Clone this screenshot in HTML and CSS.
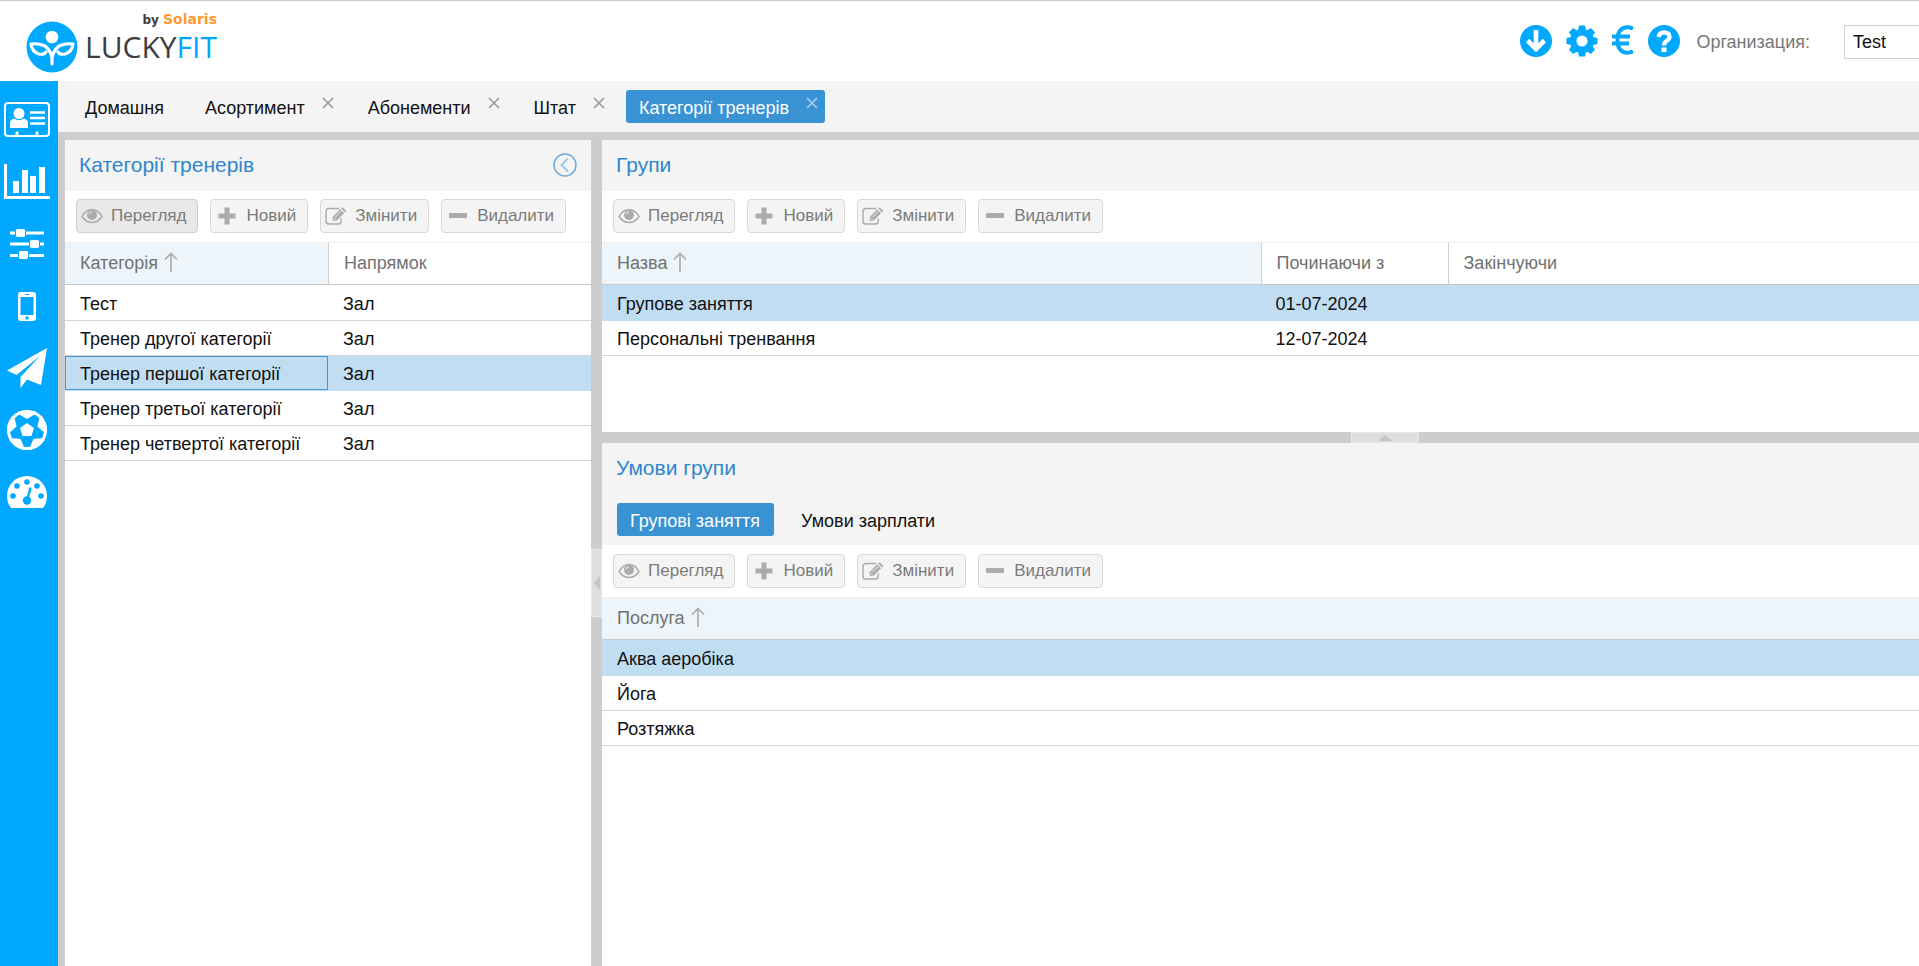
FILE: index.html
```html
<!DOCTYPE html>
<html lang="uk">
<head>
<meta charset="utf-8">
<title>LuckyFit</title>
<link rel="stylesheet" href="styles.css">
</head>
<body>
<svg class="defs" aria-hidden="true">
  <symbol id="eye" viewBox="0 0 22 16"><path d="M1 8.500Q5 1.500 11 1.500T21 8.500Q17 14.500 11 14.500T1 8.500Z" fill="none" stroke="currentColor" stroke-width="1.500"/><circle cx="11" cy="7" r="5" fill="currentColor"/><path d="M8.200 6.500Q8.500 4 11 3.800" fill="none" stroke="#f4f4f4" stroke-width="1"/></symbol>
  <symbol id="plus" viewBox="0 0 18 18"><path d="M6.500 0.500h5v6h6v5h-6v6h-5v-6h-6v-5h6z" fill="currentColor"/></symbol>
  <symbol id="minus" viewBox="0 0 18 18"><rect y="6" width="18" height="5" rx="1" fill="currentColor"/></symbol>
  <symbol id="edit" viewBox="0 0 23 19"><path d="M15 1.500H4Q1 1.500 1 4.500V15Q1 18 4 18H14Q17 18 17 15V12" fill="none" stroke="currentColor" stroke-width="1.500"/><path d="M8 14.500V10.500L16 2.500L20 6.500L12 14.500Z" fill="currentColor"/><path d="M17 1.500L18.500 0.300L22.500 4.200L21 5.700Z" fill="currentColor"/><path d="M9 11.500L11 13.500M11 10.500L17 4.500" stroke="#f4f4f4" stroke-width="1"/></symbol>
  <symbol id="close" viewBox="0 0 12 12"><path d="M1 1L11 11M11 1L1 11" fill="none" stroke="currentColor" stroke-width="1.600"/></symbol>
  <symbol id="up" viewBox="0 0 14 20"><path d="M7 20V1.500M1 7.500L7 1.500L13 7.500" fill="none" stroke="currentColor" stroke-width="1.700"/></symbol>
</svg>

<header class="top">
  <a class="logo" href="#">
    <svg class="logo-mark" viewBox="0 0 52 52" aria-hidden="true">
      <circle cx="26" cy="26" r="25.500" fill="#00a9ff"/>
      <circle cx="26" cy="16" r="6.300" fill="#fff"/>
      <path d="M26 43V37Q25 30 19 25Q12 22 5 23Q6 31 13 33Q18 34 20 31M26 43V37Q27 30 33 25Q40 22 47 23Q46 31 39 33Q34 34 32 31" fill="none" stroke="#fff" stroke-width="3.200" stroke-linecap="round" stroke-linejoin="round"/>
    </svg>
    <span class="logo-text">
      <span class="logo-by">by <span class="logo-brand">Solaris</span></span>
      <span class="logo-name">LUCKY<span class="logo-fit">FIT</span></span>
    </span>
  </a>
  <div class="tools">
    <button class="tool" aria-label="Download"><svg viewBox="0 0 32 32" width="32" height="32"><circle cx="16" cy="16" r="16" fill="currentColor"/><path d="M16 5V22M7.500 15.500L16 24L24.500 15.500" fill="none" stroke="#fff" stroke-width="4.600"/></svg></button>
    <button class="tool" aria-label="Settings"><svg viewBox="0 0 32 32" width="32" height="32"><g fill="currentColor"><circle cx="16" cy="16" r="12"/><g id="teeth"><path d="M13 0.500h6l1 5h-8zM13 31.500h6l1-5h-8zM0.500 13v6l5 1v-8zM31.500 13v6l-5 1v-8z"/></g><use href="#teeth" transform="rotate(45 16 16)"/></g><circle cx="16" cy="16" r="5.500" fill="#fff"/></svg></button>
    <button class="tool" aria-label="Currency"><svg viewBox="0 0 22 30" width="22" height="30"><path d="M21 3.500Q9 -1 5.500 11V19Q9 31 21 26.500M0 11.500H18M0 18.500H17" fill="none" stroke="currentColor" stroke-width="4"/></svg></button>
    <button class="tool" aria-label="Help"><svg viewBox="0 0 32 32" width="32" height="32"><circle cx="16" cy="16" r="16" fill="currentColor"/><path d="M10.500 12Q11.500 7.300 16 7.300Q21.500 7.500 21.500 12Q21.500 14 18.500 16Q16 17.500 16 20.500" fill="none" stroke="#fff" stroke-width="4.300"/><rect x="13.500" y="22.500" width="5" height="4.500" fill="#fff"/></svg></button>
    <label class="org-label" for="org">Организация:</label>
    <input class="org-input" id="org" type="text" value="Test">
  </div>
</header>

<div class="body">
  <nav class="side">
    <a href="#" aria-label="Clients"><svg viewBox="0 0 46 36" width="46" height="36"><rect x="1" y="1" width="44" height="33" rx="3" fill="none" stroke="#fff" stroke-width="2"/><circle cx="15" cy="11.500" r="5.500" fill="#fff"/><path d="M6 26V21Q6 17.500 10 16.500Q15 20 20 16.500Q24 17.500 24 21V26Z" fill="#fff"/><path d="M26 10.500H41M26 16H41M26 21.500H41" stroke="#fff" stroke-width="2.600"/><path d="M12 34V30H14V34M32 34V30H34V34" fill="#fff" stroke="#fff"/></svg></a>
    <a href="#" aria-label="Reports"><svg viewBox="0 0 46 36" width="46" height="36"><path d="M1.500 0V33.500H46" fill="none" stroke="#fff" stroke-width="3"/><path d="M9 17h6v12H9zM18 6h6v23h-6zM26 12h6v17h-6zM35 3h6v26h-6z" fill="#fff"/></svg></a>
    <a href="#" aria-label="Settings"><svg viewBox="0 0 34 32" width="34" height="32"><path d="M0 5H34M0 16H34M0 27.500H34" stroke="#fff" stroke-width="3"/><g fill="#fff" stroke="#00a9ff"><rect x="5.500" y="0.500" width="10" height="9" rx="2"/><rect x="19.500" y="11.500" width="10" height="9" rx="2"/><rect x="8.500" y="22.500" width="10" height="9" rx="2"/></g></svg></a>
    <a href="#" aria-label="Mobile"><svg viewBox="0 0 18 29" width="18" height="29"><rect width="18" height="29" rx="3" fill="#fff"/><rect x="2.500" y="5" width="13" height="18" fill="#00a9ff"/><circle cx="9" cy="26" r="1.700" fill="#00a9ff"/><path d="M7 2.500h4" stroke="#00a9ff"/></svg></a>
    <a href="#" aria-label="Messages"><svg viewBox="0 0 40 40" width="40" height="40"><path d="M40 0L0 22.500L9.500 27L33 8L13.500 29V40L20 31.500L34 37Z" fill="#fff"/></svg></a>
    <a href="#" aria-label="Sport"><svg viewBox="0 0 40 40" width="40" height="40"><circle cx="20" cy="20" r="20" fill="#fff"/><circle cx="20" cy="20" r="17" fill="#00a9ff"/><path id="patch" d="M11 1.500L14 5.500L20 9L26 5.500L29 1.500L20 0Z" fill="#fff"/><use href="#patch" transform="rotate(72 20 20)"/><use href="#patch" transform="rotate(144 20 20)"/><use href="#patch" transform="rotate(216 20 20)"/><use href="#patch" transform="rotate(288 20 20)"/><path d="M20 13L27 18L24.500 26H15.500L13 18Z" fill="#fff"/></svg></a>
    <a href="#" aria-label="Dashboard"><svg viewBox="0 0 40 32" width="40" height="32"><path d="M4 32Q0 27 0 20A20 20 0 0 1 40 20Q40 27 36 32Z" fill="#fff"/><g fill="#00a9ff"><circle cx="6" cy="20" r="2.800"/><circle cx="10" cy="10" r="2.800"/><circle cx="20" cy="6" r="2.800"/><circle cx="30" cy="10" r="2.800"/><circle cx="34" cy="20" r="2.800"/><circle cx="20" cy="24.500" r="4.200"/></g><path d="M20.500 23L23.500 11.500" stroke="#00a9ff" stroke-width="2.400"/></svg></a>
  </nav>

  <main class="work">
    <div class="tabs">
      <button class="tab">Домашня</button>
      <button class="tab">Асортимент<svg class="x"><use href="#close"/></svg></button>
      <button class="tab">Абонементи<svg class="x"><use href="#close"/></svg></button>
      <button class="tab">Штат<svg class="x"><use href="#close"/></svg></button>
      <button class="tab active">Категорії тренерів<svg class="x"><use href="#close"/></svg></button>
    </div>

    <div class="panes">
      <section class="panel left">
        <div class="panel-head">
          <h2>Категорії тренерів</h2>
          <button class="collapse" aria-label="Згорнути"><svg viewBox="0 0 24 24" width="24" height="24"><circle cx="12" cy="12" r="11" fill="none" stroke="#6fabd8" stroke-width="1.500"/><path d="M15 5.500L8.500 12L15 18.500" fill="none" stroke="#9cc8ea" stroke-width="2"/></svg></button>
        </div>
        <div class="bar">
          <button class="btn pressed"><svg class="ic"><use href="#eye"/></svg>Перегляд</button>
          <button class="btn"><svg class="ic ic-sm"><use href="#plus"/></svg>Новий</button>
          <button class="btn"><svg class="ic"><use href="#edit"/></svg>Змінити</button>
          <button class="btn"><svg class="ic ic-sm"><use href="#minus"/></svg>Видалити</button>
        </div>
        <table class="grid categories">
          <thead><tr><th class="sorted">Категорія<svg class="sort"><use href="#up"/></svg></th><th>Напрямок</th></tr></thead>
          <tbody>
            <tr><td>Тест</td><td>Зал</td></tr>
            <tr><td>Тренер другої категорії</td><td>Зал</td></tr>
            <tr class="selected"><td class="focus">Тренер першої категорії</td><td>Зал</td></tr>
            <tr><td>Тренер третьої категорії</td><td>Зал</td></tr>
            <tr><td>Тренер четвертої категорії</td><td>Зал</td></tr>
          </tbody>
        </table>
      </section>

      <div class="split split-v"><button class="grip grip-v" aria-label="Згорнути"><svg viewBox="0 0 6 14" width="6" height="14"><path d="M6 0V14L0 7Z" fill="#c4c4c4"/></svg></button></div>

      <div class="right">
        <section class="panel groups">
          <div class="panel-head"><h2>Групи</h2></div>
          <div class="bar">
            <button class="btn"><svg class="ic"><use href="#eye"/></svg>Перегляд</button>
            <button class="btn"><svg class="ic ic-sm"><use href="#plus"/></svg>Новий</button>
            <button class="btn"><svg class="ic"><use href="#edit"/></svg>Змінити</button>
            <button class="btn"><svg class="ic ic-sm"><use href="#minus"/></svg>Видалити</button>
          </div>
          <table class="grid">
            <colgroup><col class="c-name"><col class="c-from"><col></colgroup>
            <thead><tr><th class="sorted">Назва<svg class="sort"><use href="#up"/></svg></th><th>Починаючи з</th><th>Закінчуючи</th></tr></thead>
            <tbody>
              <tr class="selected"><td>Групове заняття</td><td>01-07-2024</td><td></td></tr>
              <tr><td>Персональні тренвання</td><td>12-07-2024</td><td></td></tr>
            </tbody>
          </table>
        </section>

        <div class="split split-h"><button class="grip grip-h" aria-label="Згорнути"><svg viewBox="0 0 14 6" width="14" height="6"><path d="M0 6H14L7 0Z" fill="#c4c4c4"/></svg></button></div>

        <section class="panel terms">
          <div class="panel-head"><h2>Умови групи</h2></div>
          <div class="subtabs">
            <button class="tab active">Групові заняття</button>
            <button class="tab">Умови зарплати</button>
          </div>
          <div class="bar">
            <button class="btn"><svg class="ic"><use href="#eye"/></svg>Перегляд</button>
            <button class="btn"><svg class="ic ic-sm"><use href="#plus"/></svg>Новий</button>
            <button class="btn"><svg class="ic"><use href="#edit"/></svg>Змінити</button>
            <button class="btn"><svg class="ic ic-sm"><use href="#minus"/></svg>Видалити</button>
          </div>
          <table class="grid">
            <thead><tr><th class="sorted">Послуга<svg class="sort"><use href="#up"/></svg></th></tr></thead>
            <tbody>
              <tr class="selected"><td>Аква аеробіка</td></tr>
              <tr><td>Йога</td></tr>
              <tr><td>Розтяжка</td></tr>
            </tbody>
          </table>
        </section>
      </div>
    </div>
  </main>
</div>
</body>
</html>
```
FILE: styles.css
```css
* { box-sizing: border-box; }

body {
  margin: 0;
  height: 100vh;
  display: flex;
  flex-direction: column;
  overflow: hidden;
  background: #fff;
  color: #111;
  font: 18px/22px "Liberation Sans", Arial, sans-serif;
}

button, input { font: inherit; color: inherit; }
button { margin: 0; padding: 0; border: 0; background: none; cursor: pointer; }
svg { display: block; flex: none; }
.defs { position: absolute; width: 0; height: 0; }

/* Header */
.top {
  display: flex;
  justify-content: space-between;
  height: 81px;
  flex: none;
  border-top: 1px solid #ccc;
}
.logo { display: flex; padding: 10px 0 0 26px; gap: 7px; text-decoration: none; color: #3d3d3d; }
.logo-mark { width: 52px; height: 52px; margin-top: 10px; }
.logo-text { display: flex; flex-direction: column; }
.logo-by { align-self: flex-end; font: bold 12px/16px "DejaVu Sans", sans-serif; }
.logo-brand { font-size: 14px; color: #ff9a2e; }
.logo-name { font: 30px/38px "Open Sans", sans-serif; }
.logo-fit { color: #00a9ff; }

.tools { display: flex; align-items: flex-start; padding-top: 24px; }
.tool { color: #00a9ff; margin-right: 14px; }
.org-label { color: #777; line-height: 34px; margin: 0 34px 0 2px; }
.org-input {
  width: 75px;
  height: 34px;
  padding: 0 8px;
  border: 1px solid #cecece;
  border-right: 0;
  background: #fff;
}

/* Frame */
.body { flex: 1; display: flex; min-height: 0; }
.side {
  width: 58px;
  flex: none;
  display: flex;
  flex-direction: column;
  background: #00a9ff;
  padding: 8px 4px 0 0;
}
.side a { height: 62px; display: flex; align-items: center; justify-content: center; }
.work { flex: 1; min-width: 0; display: flex; flex-direction: column; background: #cdcdcd; }

/* Tabs */
.tabs {
  display: flex;
  gap: 14px;
  height: 51px;
  flex: none;
  padding: 9px 14px;
  background: #f4f4f4;
}
.tab {
  display: flex;
  align-items: center;
  height: 33px;
  padding: 2px 14px 0 13px;
  border-radius: 3px;
}
.tab.active { background: #3892d4; color: #fff; }
.x { width: 12px; height: 12px; margin: 0 -7px 10px 17px; color: #999; }
.active .x { color: #a9d0ee; }

/* Panels */
.panes { flex: 1; min-height: 0; display: flex; padding: 8px 0 0 7px; }
.panel { background: #fff; overflow: hidden; }
.left { width: 526px; flex: none; }
.right { flex: 1; min-width: 0; display: flex; flex-direction: column; }
.groups { flex: none; height: 292px; }
.terms { flex: 1; min-height: 0; }
.panel-head {
  display: flex;
  align-items: center;
  justify-content: space-between;
  height: 51px;
  padding: 0 14px 2px;
  background: #f4f4f4;
}
.panel-head h2 { margin: 0; font-size: 21px; font-weight: 400; color: #2f86cc; }
.subtabs { display: flex; gap: 14px; padding: 9px 15px; background: #f4f4f4; }

.bar { display: flex; gap: 12px; padding: 8px 11px 9px; }
.terms .bar { padding-top: 9px; }
.btn {
  display: flex;
  align-items: center;
  height: 34px;
  padding: 0 11px 0 4px;
  border: 1px solid #d8d8d8;
  border-radius: 4px;
  background: #f4f4f4;
  color: #7b7b7b;
  font-size: 17px;
}
.pressed { background: #e9e9e9; border-color: #cfcfcf; }
.ic { width: 22px; height: 18px; margin-right: 8px; color: #ababab; }
.ic-sm { width: 18px; margin: 0 10px 0 3px; }

/* Splitters */
.split { flex: none; display: flex; align-items: center; justify-content: center; background: #cdcdcd; }
.split-v { width: 11px; padding-top: 60px; }
.split-h { height: 11px; padding-left: 248px; }
.grip { display: flex; align-items: center; justify-content: center; background: #dedede; border: 1px solid #e8e8e8; }
.grip-v { width: 11px; height: 68px; }
.grip-h { width: 68px; height: 11px; }

/* Grids */
.grid { width: 100%; border-collapse: separate; border-spacing: 0; table-layout: fixed; }
.grid th, .grid td { padding: 0 15px; text-align: left; font-weight: 400; white-space: nowrap; }
.grid th { height: 43px; padding-bottom: 2px; color: #717171; border-top: 1px solid #f0f0f0; border-bottom: 1px solid #c8c8c8; }
.grid th + th { border-left: 1px solid #cfcfcf; }
.grid td { height: 35px; padding-top: 2px; border-bottom: 1px solid #d4d4d4; }
.grid tbody tr:first-child td { height: 36px; }
.grid .sorted { background: #edf5fb; }
.grid .selected td { background: #c1ddf1; border-bottom-color: #c1ddf1; }
.grid td.focus { box-shadow: inset 0 0 0 1px #4597d7; }
.categories th { width: 50%; }
.c-name { width: 50%; }
.c-from { width: 187px; }
.sort { display: inline-block; width: 14px; height: 20px; margin-left: 6px; vertical-align: -3px; color: #adadad; }
```
